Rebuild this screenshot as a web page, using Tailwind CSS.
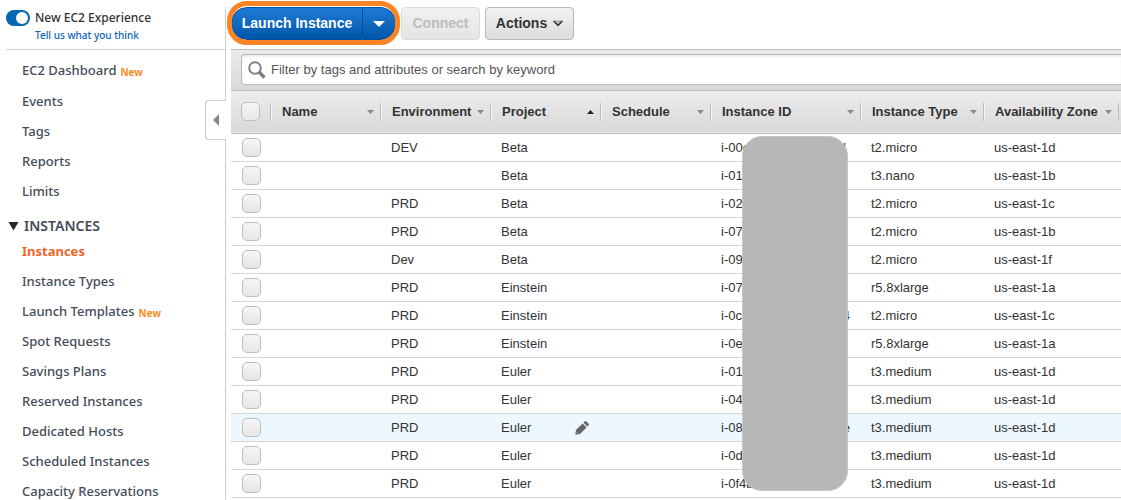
<!DOCTYPE html>
<html lang="en">
<head>
<meta charset="utf-8">
<title>EC2 Instances</title>
<script src="https://cdn.jsdelivr.net/npm/@tailwindcss/browser@4"></script>
</head>
<body class="flex h-screen overflow-hidden bg-white font-['Liberation_Sans',Arial,sans-serif] text-[13px] text-[#333]">

<aside class="relative mt-[7px] w-[226px] shrink-0 border-r border-[#d0d0d0] font-['Noto_Sans',sans-serif] text-[#444c57]">
  <header class="ml-1.5 h-[43px] border-b border-[#d5d5d5]">
    <div class="flex h-[21px] items-center gap-[5px]">
      <input id="exp" type="checkbox" role="switch" checked class="peer sr-only">
      <label for="exp" class="flex h-4 w-6 items-center justify-end rounded-full bg-[#0368b4] p-0.5" aria-label="New EC2 Experience"><span class="size-3 rounded-full bg-white"></span></label>
      <label for="exp" class="text-[12px] font-medium text-[#333]">New EC2 Experience</label>
    </div>
    <a href="#" class="ml-[29px] block text-[10px] leading-[15px] font-medium text-[#0b65b5]">Tell us what you think</a>
  </header>
  <nav class="pt-[5px] pl-[22px] text-[13px] leading-[30px] font-medium whitespace-nowrap">
    <ul>
      <li class="flex h-[30px] gap-1"><a href="#">EC2 Dashboard</a><span class="pt-0.5 text-[10px] font-bold text-[#ff8a1f]">New</span></li>
      <li class="mt-px"><a href="#">Events</a></li>
      <li><a href="#">Tags</a></li>
      <li><a href="#">Reports</a></li>
      <li><a href="#">Limits</a></li>
    </ul>
    <button type="button" class="mt-[9px] -ml-[14px] flex h-[21px] items-center gap-[5px] text-[14px] font-semibold">
      <svg class="h-2.5 w-[11px]" viewBox="0 0 11 10"><path d="M.5 1h10L5.5 9.5z" fill="#222a30"/></svg>INSTANCES
    </button>
    <ul>
      <li><a href="#" class="font-bold text-[#f0642a]">Instances</a></li>
      <li><a href="#">Instance Types</a></li>
      <li class="flex h-[30px] gap-1"><a href="#">Launch Templates</a><span class="pt-0.5 text-[10px] font-bold text-[#ff8a1f]">New</span></li>
      <li><a href="#">Spot Requests</a></li>
      <li><a href="#">Savings Plans</a></li>
      <li><a href="#">Reserved Instances</a></li>
      <li><a href="#">Dedicated Hosts</a></li>
      <li><a href="#">Scheduled Instances</a></li>
      <li><a href="#">Capacity Reservations</a></li>
    </ul>
  </nav>
  <button type="button" aria-label="Collapse navigation" class="absolute top-[93px] -right-px flex h-10 w-[21px] items-center justify-center rounded-l border border-r-0 border-[#ccc] bg-white">
    <svg class="h-3 w-1.5" viewBox="0 0 6 12"><path d="M6 0v12L0 6z" fill="#888"/></svg>
  </button>
</aside>

<main class="relative ml-[5px] min-w-0 flex-1">
  <div class="flex h-[49px] gap-[5px] pt-[7px]">
    <div class="relative flex h-[33px] w-[165px] shrink-0 text-[14px] font-bold text-white">
      <button type="button" class="w-[132px] rounded-l-2xl border border-[#004f9c] bg-linear-to-b from-[#1f7bd6] to-[#0056a8]">Launch Instance</button>
      <button type="button" aria-label="Launch options" class="flex flex-1 items-center justify-center rounded-r-2xl border border-l-0 border-[#004f9c] bg-linear-to-b from-[#1f7bd6] to-[#0056a8]"><svg class="h-1.5 w-3" viewBox="0 0 12 6"><path d="M0 0h12L6 6z" fill="#fff"/></svg></button>
      <span class="pointer-events-none absolute -inset-x-1 -top-1.5 -bottom-[5px] rounded-[20px] border-[5px] border-[#fb8524]"></span>
    </div>
    <button type="button" disabled class="h-[33px] w-[79px] rounded border border-[#dcdcdc] bg-linear-to-b from-[#f1f1f1] to-[#e5e5e5] text-[14px] font-bold text-[#bdbdbd]">Connect</button>
    <button type="button" class="flex h-[33px] w-[89px] items-center justify-center gap-1.5 rounded border border-[#b8b8b8] bg-linear-to-b from-[#f2f2f2] to-[#dcdcdc] text-[14px] font-bold text-[#333]">Actions
      <svg class="h-[7px] w-[10px]" viewBox="0 0 10 7"><path d="M1 .5h8L5 3z" fill="#aaa"/><path d="M.7 1L5 5.4 9.3 1" fill="none" stroke="#333" stroke-width="1.7"/></svg>
    </button>
  </div>

  <div class="h-[42px] overflow-hidden border-y border-[#bdbdbd] bg-linear-to-b from-[#ebebeb] to-[#d9d9d9] pt-1 pl-2.5">
    <label class="flex h-[31px] items-center gap-[5px] rounded-l border border-r-0 border-[#bbb] bg-white pl-1.5 shadow-[inset_0_2px_2px_#eee]">
      <svg class="size-[18px] shrink-0" viewBox="0 0 18 18" fill="none" stroke="#808080"><circle cx="7" cy="7" r="5.8" stroke-width="2"/><path d="M11.2 11.2l5.3 5.3" stroke-width="3.4"/></svg>
      <input type="text" aria-label="Filter" placeholder="Filter by tags and attributes or search by keyword" class="min-w-0 flex-1 bg-transparent text-[13px] outline-none placeholder:text-[#555]">
    </label>
  </div>

  <table class="w-full table-fixed border-collapse text-left leading-5 whitespace-nowrap">
    <colgroup><col class="w-[39px]"><col class="w-[110px]"><col class="w-[110px]"><col class="w-[110px]"><col class="w-[110px]"><col class="w-[150px]"><col class="w-[123px]"><col class="w-[135px]"><col></colgroup>
    <thead>
      <tr id="head" class="h-[42px] border-b border-[#bbb] bg-linear-to-b from-[#ededed] to-[#d8d8d8]"></tr>
    </thead>
    <tbody id="rows"></tbody>
  </table>

  <div class="absolute top-[136px] left-[511px] h-[355px] w-[106px] rounded-[20px] border border-[#c6c6c6] bg-[#b7b7b7]"></div>
</main>

<script>
const box = label => `<input type="checkbox" aria-label="${label}" class="block size-[19px] appearance-none rounded-[5px] border border-[#bfbfbf] bg-linear-to-b from-[#f6f6f6] to-[#e6e6e6]">`;
const down = '<svg class="h-1 w-[7px]" viewBox="0 0 7 4"><path d="M0 0h7L3.5 4z" fill="#888"/></svg>';
const up = '<svg class="h-1 w-[7px]" viewBox="0 0 7 4"><path d="M0 4h7L3.5 0z" fill="#222"/></svg>';
const columns = ['Name', 'Environment', 'Project', 'Schedule', 'Instance ID', 'Instance Type', 'Availability Zone'];
document.getElementById('head').innerHTML =
  `<th class="p-0 pl-2.5">${box('Select all')}</th>` +
  columns.map(c => `<th class="p-0"><button type="button" class="flex h-[18px] w-full items-center justify-between border-l border-[#bbb] pr-1.5 pl-[11px] font-bold shadow-[inset_1px_0_0_#f5f5f5]">${c}${c === 'Project' ? up : down}</button></th>`).join('') +
  '<th class="p-0"><div class="h-[18px] border-l border-[#bbb]"></div></th>';

// environment, project, start of ID, end of ID, type, zone
const data = [
  ['DEV', 'Beta', 'i-00e', 'd', 't2.micro', 'us-east-1d'],
  ['', 'Beta', 'i-01', '', 't3.nano', 'us-east-1b'],
  ['PRD', 'Beta', 'i-02', '', 't2.micro', 'us-east-1c'],
  ['PRD', 'Beta', 'i-07', '', 't2.micro', 'us-east-1b'],
  ['Dev', 'Beta', 'i-09', '', 't2.micro', 'us-east-1f'],
  ['PRD', 'Einstein', 'i-07', '', 'r5.8xlarge', 'us-east-1a'],
  ['PRD', 'Einstein', 'i-0c', '4', 't2.micro', 'us-east-1c'],
  ['PRD', 'Einstein', 'i-0e', '', 'r5.8xlarge', 'us-east-1a'],
  ['PRD', 'Euler', 'i-01', '', 't3.medium', 'us-east-1d'],
  ['PRD', 'Euler', 'i-04', '', 't3.medium', 'us-east-1d'],
  ['PRD', 'Euler', 'i-08', 'e', 't3.medium', 'us-east-1d'],
  ['PRD', 'Euler', 'i-0d', '', 't3.medium', 'us-east-1d'],
  ['PRD', 'Euler', 'i-0f4b', '', 't3.medium', 'us-east-1d'],
];
const pencil = '<svg class="size-[14px]" viewBox="0 0 14 14"><path d="M.3 13.7L1 9 7.6 2.4l4 4L5 13zM8.4 1.7L9.6.5q.9-.8 1.8 0l2.1 2.1q.8.9 0 1.8l-1.2 1.2z" fill="#666"/><path d="M1.7 11.2l1.1 1.1" stroke="#ddd" stroke-width=".8"/></svg>';
document.getElementById('rows').innerHTML = data.map(([env, project, idStart, idEnd, type, zone], i) => {
  const hot = i === 10;
  return `<tr class="h-7 border-b border-[#d5d5d5] ${hot ? 'bg-[#edf8fe]' : 'bg-white'}">
    <td class="p-0 pl-[11px]">${box('Select instance ' + (i + 1))}</td>
    <td class="p-0"></td>
    <td class="p-0 pt-0.5 pl-[11px]">${env}</td>
    <td class="p-0 pt-0.5 pl-[11px]"><div class="flex items-center justify-between pr-[11px]">${project}${hot ? pencil : ''}</div></td>
    <td class="p-0"></td>
    <td class="p-0 pt-0.5 pl-[11px]"><div class="flex ${i === 0 ? 'w-[125px]' : 'w-[129px]'} justify-between"><span>${idStart}</span><span>${idEnd}</span></div></td>
    <td class="p-0 pt-0.5 pl-[11px]">${type}</td>
    <td class="p-0 pt-0.5 pl-[11px]">${zone}</td>
    <td class="p-0"></td>
  </tr>`;
}).join('');
</script>
</body>
</html>
